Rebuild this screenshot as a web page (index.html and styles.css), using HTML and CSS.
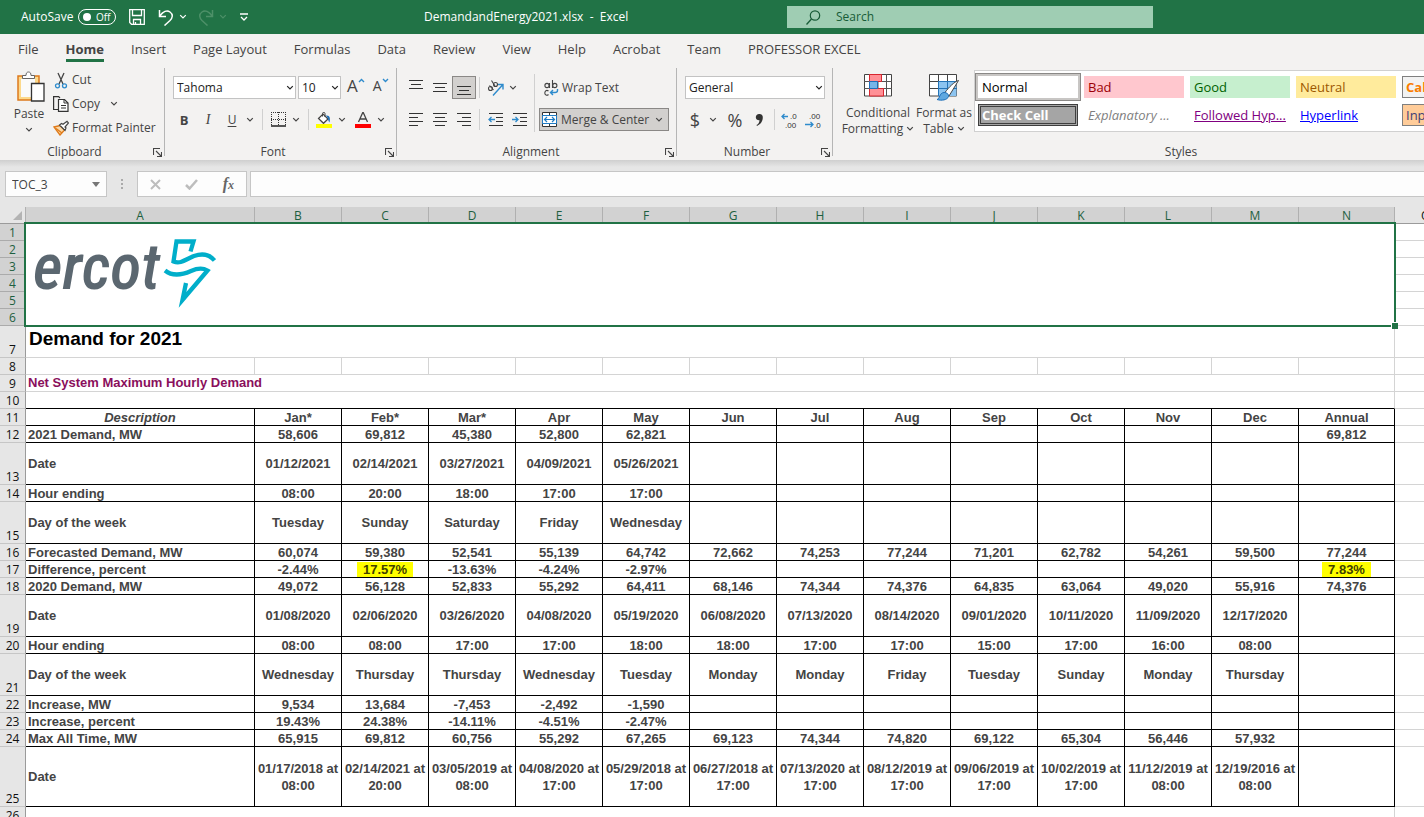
FILE: index.html
```html
<!DOCTYPE html>
<html lang="en">
<head>
<meta charset="utf-8">
<title>DemandandEnergy2021.xlsx - Excel</title>
<link rel="stylesheet" href="styles.css">
</head>
<body>
<svg class="defs" aria-hidden="true">
  <symbol id="chev" viewBox="0 0 8 6"><path d="M1.2 1.2 4 4l2.800-2.800" fill="none" stroke="currentColor" stroke-width="1.200"/></symbol>
  <symbol id="launch" viewBox="0 0 9 9"><path d="M.5 7V.5H7M3 3l5 5M8.500 4v4.500H4" fill="none" stroke="#444" stroke-width="1.100"/></symbol>
</svg>

<header class="titlebar">
  <div class="quick">
    <span id="as">AutoSave</span>
    <button class="toggle" aria-labelledby="as"><i></i>Off</button>
    <button class="qb save" aria-label="Save"><svg width="16" height="16" viewBox="0 0 16 16"><path d="M.7.700h14.600v14.600H2.500L.7 13.500zM3.500 1v5.500h9V1M4.500 15v-4.500h7V15M6.500 15v-2" fill="none" stroke="#fff" stroke-width="1.300"/></svg></button>
    <button class="qb undo" aria-label="Undo"><svg width="16" height="17" viewBox="0 0 16 17"><path d="M1.500 1v6.500H8M1.800 7C5 2.500 9 1 12 3c3.500 2.500 2.500 6 0 8.500L6.500 16.500" fill="none" stroke="#fff" stroke-width="1.500"/></svg></button>
    <svg class="c light" ><use href="#chev"/></svg>
    <button class="qb redo" aria-label="Redo"><svg width="16" height="17" viewBox="0 0 16 17"><path d="M14.500 1v6.500H8M14.200 7C11 2.500 7 1 4 3 .5 5.500 1.500 9 4 11.500L9.500 16.500" fill="none" stroke="#4d9068" stroke-width="1.500"/></svg></button>
    <svg class="c dim"><use href="#chev"/></svg>
    <button class="qb more" aria-label="Customize toolbar"><svg width="8" height="8" viewBox="0 0 8 8"><path d="M0 1h8M1 4l3 3 3-3" fill="none" stroke="#fff" stroke-width="1.300"/></svg></button>
  </div>
  <div class="doc">DemandandEnergy2021.xlsx &nbsp;-&nbsp; Excel</div>
  <label class="search">
    <svg width="15" height="15" viewBox="0 0 15 15"><circle cx="9" cy="5.500" r="4.700" fill="none" stroke="#185c37" stroke-width="1.200"/><path d="M5.500 9 .5 14.500" stroke="#185c37" stroke-width="1.300"/></svg>
    <input type="search" placeholder="Search" aria-label="Search">
  </label>
</header>

<nav class="tabs">
  <a href="#">File</a><a href="#" class="on">Home</a><a href="#">Insert</a><a href="#">Page Layout</a><a href="#">Formulas</a><a href="#">Data</a><a href="#">Review</a><a href="#">View</a><a href="#">Help</a><a href="#">Acrobat</a><a href="#">Team</a><a href="#">PROFESSOR EXCEL</a>
</nav>

<section class="ribbon">
  <div class="group clip">
    <div class="body">
      <button class="paste">
        <svg width="30" height="32" viewBox="0 0 30 32"><path d="M2 5h21v24H2z" fill="#fcd98c" stroke="#dd7a1c" stroke-width="1.500"/><path d="M5 8h14v18H5z" fill="#fafafa"/><path d="M6.500 7.500v-3H10C10 2 11 1 12.500 1S15 2 15 4.500h3.500v3z" fill="#fff" stroke="#666"/><path d="M15.500 12.500h12.500v17.500H15.500z" fill="#fff" stroke="#333" stroke-width="1.300"/></svg>
        <span>Paste</span>
        <svg class="c"><use href="#chev"/></svg>
      </button>
      <div class="stack">
        <button><svg width="16" height="17" viewBox="0 0 16 17"><path d="M5 1l5 11M11 1 6 12" stroke="#444" stroke-width="1.300" fill="none"/><circle cx="4.500" cy="13.800" r="2" fill="none" stroke="#2e8bcc" stroke-width="1.300"/><circle cx="11.500" cy="13.800" r="2" fill="none" stroke="#2e8bcc" stroke-width="1.300"/></svg>Cut</button>
        <button><svg width="16" height="16" viewBox="0 0 16 16"><path d="M5 13.500H.6V.600h5L7 2" fill="none" stroke="#333" stroke-width="1.200"/><path d="M5.500 3.500h6l3.500 3.500v8.400H5.500z" fill="#fff" stroke="#333" stroke-width="1.200"/><path d="M11 3.500V7h4M8 9.500h5M8 12h5" fill="none" stroke="#333"/></svg>Copy<svg class="c"><use href="#chev"/></svg></button>
        <button><svg width="16" height="16" viewBox="0 0 16 16"><path d="M1 7l6-1.500 4.500 4.500L7 15z" fill="#fbd9a8" stroke="#e07b1a" stroke-width="1.400"/><path d="M3 8.500 9 13" stroke="#e07b1a" stroke-width="1.400"/><path d="M6.500 5 12 10.500l1-2.500-1-1 3.500-4L14 1.200l-4 3L8.500 3.500z" fill="#fff" stroke="#444" stroke-width="1.200"/></svg>Format Painter</button>
      </div>
    </div>
    <div class="foot"><span>Clipboard</span><svg class="l"><use href="#launch"/></svg></div>
  </div>

  <div class="group font">
    <div class="body rows">
      <div class="row r1">
        <label class="combo name"><select aria-label="Font"><option>Tahoma</option></select><svg class="c"><use href="#chev"/></svg></label>
        <label class="combo size"><select aria-label="Font size"><option>10</option></select><svg class="c"><use href="#chev"/></svg></label>
        <button class="grow" aria-label="Increase font size"><b>A</b><svg width="7" height="5" viewBox="0 0 7 5"><path d="M1 4 3.500 1.500 6 4" fill="none" stroke="#2e8bcc" stroke-width="1.400"/></svg></button>
        <button class="shrink" aria-label="Decrease font size"><b>A</b><svg width="7" height="5" viewBox="0 0 7 5"><path d="M1 1l2.500 2.500L6 1" fill="none" stroke="#2e8bcc" stroke-width="1.400"/></svg></button>
      </div>
      <div class="row">
        <button class="t24 bold">B</button><button class="t24 ital">I</button><button class="t24 und">U</button><button class="d" aria-label="Underline options"><svg class="c"><use href="#chev"/></svg></button>
        <i class="sep"></i>
        <button class="t24" aria-label="Borders"><svg width="15" height="15" viewBox="0 0 15 15"><path d="M0 .5h15M0 7.500h15M.5 0v14M7.500 0v14M14.500 0v14" stroke="#333" stroke-dasharray="1 1"/><path d="M0 14h15" stroke="#222" stroke-width="1.500"/></svg></button><button class="d" aria-label="Border options"><svg class="c"><use href="#chev"/></svg></button>
        <i class="sep"></i>
        <button class="t24" aria-label="Fill color"><svg width="16" height="16" viewBox="0 0 16 16"><path d="M2.500 6.500 7 2l5 5-4.500 4.300z" fill="#fff" stroke="#444" stroke-width="1.200"/><path d="M6.500 4.500V1.500C6.500 0 9 0 9 1.500V5" fill="none" stroke="#444"/><path d="M10 3.500c4-.5 4.500 3 3.500 7-1-1-1.500-3-1.500-4z" fill="#1f6fb5"/><path d="M0 12h16v4H0z" fill="#ff0"/></svg></button><button class="d" aria-label="Fill options"><svg class="c"><use href="#chev"/></svg></button>
        <button class="t24 fc" aria-label="Font color"><svg width="16" height="16" viewBox="0 0 16 16"><path d="M3.500 10 8 0l4.500 10M5 7h6" fill="none" stroke="#444" stroke-width="1.300"/><path d="M0 12h16v4H0z" fill="#f00"/></svg></button><button class="d" aria-label="Font color options"><svg class="c"><use href="#chev"/></svg></button>
      </div>
    </div>
    <div class="foot"><span>Font</span><svg class="l"><use href="#launch"/></svg></div>
  </div>

  <div class="group align">
    <div class="body">
      <div class="rows">
        <div class="row">
          <button class="t24" aria-label="Top align"><svg width="14" height="15" viewBox="0 0 14 15"><path d="M0 .5h14M2 4.500h10M0 8.500h14" stroke="#333"/></svg></button>
          <button class="t24" aria-label="Middle align"><svg width="14" height="15" viewBox="0 0 14 15"><path d="M0 3.500h14M2 7.500h10M0 11.500h14" stroke="#333"/></svg></button>
          <button class="t24 sel" aria-label="Bottom align" aria-pressed="true"><svg width="14" height="15" viewBox="0 0 14 15"><path d="M0 6.500h14M2 10.500h10M0 14.500h14" stroke="#333"/></svg></button>
          <i class="sep"></i>
          <button class="t24" aria-label="Orientation"><svg width="17" height="16" viewBox="0 0 17 16"><g fill="none" stroke="#444" stroke-width="1.100"><circle cx="3.500" cy="8.500" r="2"/><path d="M2.500 5.500 6.500 10"/><circle cx="8.500" cy="4.500" r="2"/><path d="M4.500.500 8 6"/></g><path d="M6 15.500 15.500 5M11 4.500h5v5" fill="none" stroke="#2e8bcc" stroke-width="1.400"/></svg></button><button class="d" aria-label="Orientation options"><svg class="c"><use href="#chev"/></svg></button>
        </div>
        <div class="row">
          <button class="t24" aria-label="Align left"><svg width="14" height="14" viewBox="0 0 14 14"><path d="M0 .5h14M0 4.500h9M0 8.500h14M0 12.500h9" stroke="#333"/></svg></button>
          <button class="t24" aria-label="Center"><svg width="14" height="14" viewBox="0 0 14 14"><path d="M0 .5h14M2 4.500h10M0 8.500h14M2 12.500h10" stroke="#333"/></svg></button>
          <button class="t24" aria-label="Align right"><svg width="14" height="14" viewBox="0 0 14 14"><path d="M0 .5h14M5 4.500h9M0 8.500h14M5 12.500h9" stroke="#333"/></svg></button>
          <i class="sep"></i>
          <button class="t24" aria-label="Decrease indent"><svg width="15" height="14" viewBox="0 0 15 14"><path d="M1 .5h14M8 4.500h7M8 8.500h7M1 12.500h14" stroke="#333"/><path d="M7 6.500H1M3.500 4 1 6.500 3.500 9" fill="none" stroke="#2e8bcc" stroke-width="1.300"/></svg></button>
          <button class="t24" aria-label="Increase indent"><svg width="15" height="14" viewBox="0 0 15 14"><path d="M1 .5h14M8 4.500h7M8 8.500h7M1 12.500h14" stroke="#333"/><path d="M0 6.500h6M3.500 4 6 6.500 3.500 9" fill="none" stroke="#2e8bcc" stroke-width="1.300"/></svg></button>
        </div>
      </div>
      <i class="tallsep"></i>
      <div class="rows">
        <button class="wrap"><svg width="15" height="16" viewBox="0 0 15 16"><g fill="none" stroke="#444" stroke-width="1.100"><circle cx="3" cy="5.500" r="2.100"/><path d="M5.500 3v5M8.500 0v8M4.500 11C2.500 9.500.8 11 .8 13s2 3 3.700 1.500"/><circle cx="10.800" cy="5.500" r="2.100"/></g><path d="M13.500 9v1.500c0 1.500-1 2-2.500 2H6.500M9 10l-2.500 2.500L9 15" fill="none" stroke="#2e8bcc" stroke-width="1.400"/></svg>Wrap Text</button>
        <button class="merge" aria-pressed="true"><svg width="15" height="15" viewBox="0 0 15 15"><path d="M.5.500h14v14H.5zM7.500 0v15" fill="#fff" stroke="#333"/><path d="M.5 3.500h14v8H.5z" fill="#fff" stroke="#1e7bc4"/><path d="M2.500 7.500h10M5 5 2.500 7.500 5 10M10 5l2.500 2.500L10 10" fill="none" stroke="#1e7bc4" stroke-width="1.200"/></svg>Merge &amp; Center<svg class="c"><use href="#chev"/></svg></button>
      </div>
    </div>
    <div class="foot"><span>Alignment</span><svg class="l"><use href="#launch"/></svg></div>
  </div>

  <div class="group num">
    <div class="body rows">
      <label class="combo"><select aria-label="Number format"><option>General</option></select><svg class="c"><use href="#chev"/></svg></label>
      <div class="row">
        <button class="t24 big">$</button><button class="d" aria-label="Currency options"><svg class="c"><use href="#chev"/></svg></button>
        <button class="t24 big pct">%</button>
        <button class="t24" aria-label="Comma style"><svg width="9" height="14" viewBox="0 0 9 14"><path d="M4 1a3.200 3.200 0 0 1 3.800 3.500c0 4-2.500 7-5.800 8.500l-.5-1C3.500 11 4.500 9 4.500 7.200 2.500 7.400.8 6.200.8 4.200.8 2.500 2.200 1 4 1z" fill="#333"/></svg></button>
        <i class="sep"></i>
        <button class="t24 dec" aria-label="Increase decimal"><svg width="18" height="20" viewBox="0 0 18 20"><path d="M7 6.500H1M3.500 4 1 6.500 3.500 9" fill="none" stroke="#2e8bcc" stroke-width="1.300"/><text x="9" y="9">.0</text><text x="4" y="18">.00</text></svg></button>
        <button class="t24 dec" aria-label="Decrease decimal"><svg width="18" height="20" viewBox="0 0 18 20"><path d="M0 14.500h8M5.500 12 8 14.500 5.500 17" fill="none" stroke="#2e8bcc" stroke-width="1.300"/><text x="4" y="9">.00</text><text x="9" y="18">.0</text></svg></button>
      </div>
    </div>
    <div class="foot"><span>Number</span><svg class="l"><use href="#launch"/></svg></div>
  </div>

  <div class="group styles">
    <div class="body">
      <button class="large cond">
        <svg width="28" height="23" viewBox="0 0 28 23"><path d="M.5.500h27v21.500H.5z" fill="#fff" stroke="#444"/><path d="M0 7.500h28M0 14.500h28M5.500 0v22M14 0v22M22.500 0v22" stroke="#555"/><path d="M5.500.500h12v7h-12zM5.500 14.500h14v7.500h-14z" fill="#ff9096" stroke="#d8262f"/><path d="M5.500 7.500h8v7h-8z" fill="#77b5e8" stroke="#1e6fb8"/></svg>
        <span>Conditional<br>Formatting <svg class="c"><use href="#chev"/></svg></span>
      </button>
      <button class="large fmt">
        <svg width="30" height="27" viewBox="0 0 30 27"><path d="M.5.500h27v21.500H.5z" fill="#fff" stroke="#444"/><path d="M9.500 7.500h18V22h-18z" fill="#8cc4f0"/><path d="M0 7.500h28M0 14.500h28M9.500 0v22M18.500 0v22" stroke="#444"/><path d="M9.500 7.500H28M9.500 14.500H28M9.500 7v15M18.500 7v15" stroke="#2474b8"/><path d="M29.500 6.500 20 22l-4-3.500C20 13 25 8 29.500 6.500z" fill="#fff" stroke="#444"/><path d="M15 18.500c2.500 0 5 1.500 4.500 4-1 3.500-7 4.500-11.500 3 3-.5 2-6.500 7-7z" fill="#5fa8e0" stroke="#1e6fb8"/></svg>
        <span>Format as<br>Table <svg class="c"><use href="#chev"/></svg></span>
      </button>
      <div class="gallery">
        <button class="s-normal">Normal</button><button class="s-bad">Bad</button><button class="s-good">Good</button><button class="s-neutral">Neutral</button><button class="s-calc">Calculation</button>
        <button class="s-check">Check Cell</button><button class="s-expl">Explanatory ...</button><button class="s-fol">Followed Hyp...</button><button class="s-link">Hyperlink</button><button class="s-input">Input</button>
      </div>
    </div>
    <div class="foot"><span>Styles</span></div>
  </div>
</section>

<section class="formula">
  <div class="namebox"><input value="TOC_3" aria-label="Name box"><svg width="8" height="5" viewBox="0 0 8 5"><path d="M0 0h8L4 5z" fill="#777"/></svg></div>
  <i class="dots"></i>
  <div class="fbuttons">
    <button aria-label="Cancel"><svg width="11" height="11" viewBox="0 0 11 11"><path d="M1 1l9 9M10 1 1 10" stroke="#bdbdbd" stroke-width="2"/></svg></button>
    <button aria-label="Enter"><svg width="13" height="11" viewBox="0 0 13 11"><path d="M1 6l3.500 3.500L12 1" fill="none" stroke="#bdbdbd" stroke-width="2.500"/></svg></button>
    <button aria-label="Insert function" class="fx">f<small>x</small></button>
  </div>
  <input class="fx-input" aria-label="Formula">
</section>

<main class="sheet">
<table>
<colgroup><col class="c-row"><col class="c-a"><col class="c-m" span="12"><col class="c-n"><col></colgroup>
<thead><tr><th class="corner"><svg width="9" height="9" viewBox="0 0 9 9"><path d="M9 0v9H0z" fill="#b3b3b3"/></svg></th><th>A</th><th>B</th><th>C</th><th>D</th><th>E</th><th>F</th><th>G</th><th>H</th><th>I</th><th>J</th><th>K</th><th>L</th><th>M</th><th>N</th><th class="o">O</th></tr></thead>
<tbody>
<tr class="picked"><th>1</th><td class="merged" colspan="14" rowspan="6">
  <svg class="logo" width="186" height="76" viewBox="0 0 186 76" role="img" aria-label="ercot"><text x="3" y="55">ercot</text><g transform="translate(-30 -34)" fill="none" stroke="#00aeca" stroke-width="4.300" stroke-miterlimit="12"><path d="M190.500 51.500 193.500 41.500H176.500L173.500 61.500C181 64.500 186 59 194 56C203 53 210 55 214.500 60.500"/><path d="M165 70.500C173 77 182 75 191 71C199 67.500 204 68.500 207.500 70.500L182.500 100L186 83"/></g></svg>
  <i class="handle"></i></td><td></td></tr>
<tr class="picked"><th>2</th><td></td></tr>
<tr class="picked"><th>3</th><td></td></tr>
<tr class="picked"><th>4</th><td></td></tr>
<tr class="picked"><th>5</th><td></td></tr>
<tr class="picked"><th>6</th><td></td></tr>
<tr class="h32"><th>7</th><td colspan="14" class="title">Demand for 2021</td><td></td></tr>
<tr><th>8</th><td></td><td></td><td></td><td></td><td></td><td></td><td></td><td></td><td></td><td></td><td></td><td></td><td></td><td></td><td></td></tr>
<tr><th>9</th><td colspan="14" class="sub">Net System Maximum Hourly Demand</td><td></td></tr>
<tr><th>10</th><td colspan="14" class="above"></td><td></td></tr>
<tr class="data head"><th>11</th><td>Description</td><td>Jan*</td><td>Feb*</td><td>Mar*</td><td>Apr</td><td>May</td><td>Jun</td><td>Jul</td><td>Aug</td><td>Sep</td><td>Oct</td><td>Nov</td><td>Dec</td><td>Annual</td><td></td></tr>
<tr class="data"><th>12</th><td>2021 Demand, MW</td><td>58,606</td><td>69,812</td><td>45,380</td><td>52,800</td><td>62,821</td><td></td><td></td><td></td><td></td><td></td><td></td><td></td><td>69,812</td><td></td></tr>
<tr class="data h42"><th>13</th><td>Date</td><td>01/12/2021</td><td>02/14/2021</td><td>03/27/2021</td><td>04/09/2021</td><td>05/26/2021</td><td></td><td></td><td></td><td></td><td></td><td></td><td></td><td></td><td></td></tr>
<tr class="data"><th>14</th><td>Hour ending</td><td>08:00</td><td>20:00</td><td>18:00</td><td>17:00</td><td>17:00</td><td></td><td></td><td></td><td></td><td></td><td></td><td></td><td></td><td></td></tr>
<tr class="data h42"><th>15</th><td>Day of the week</td><td>Tuesday</td><td>Sunday</td><td>Saturday</td><td>Friday</td><td>Wednesday</td><td></td><td></td><td></td><td></td><td></td><td></td><td></td><td></td><td></td></tr>
<tr class="data"><th>16</th><td>Forecasted Demand, MW</td><td>60,074</td><td>59,380</td><td>52,541</td><td>55,139</td><td>64,742</td><td>72,662</td><td>74,253</td><td>77,244</td><td>71,201</td><td>62,782</td><td>54,261</td><td>59,500</td><td>77,244</td><td></td></tr>
<tr class="data"><th>17</th><td>Difference, percent</td><td>-2.44%</td><td><mark>17.57%</mark></td><td>-13.63%</td><td>-4.24%</td><td>-2.97%</td><td></td><td></td><td></td><td></td><td></td><td></td><td></td><td><mark>7.83%</mark></td><td></td></tr>
<tr class="data"><th>18</th><td>2020 Demand, MW</td><td>49,072</td><td>56,128</td><td>52,833</td><td>55,292</td><td>64,411</td><td>68,146</td><td>74,344</td><td>74,376</td><td>64,835</td><td>63,064</td><td>49,020</td><td>55,916</td><td>74,376</td><td></td></tr>
<tr class="data h42"><th>19</th><td>Date</td><td>01/08/2020</td><td>02/06/2020</td><td>03/26/2020</td><td>04/08/2020</td><td>05/19/2020</td><td>06/08/2020</td><td>07/13/2020</td><td>08/14/2020</td><td>09/01/2020</td><td>10/11/2020</td><td>11/09/2020</td><td>12/17/2020</td><td></td><td></td></tr>
<tr class="data"><th>20</th><td>Hour ending</td><td>08:00</td><td>08:00</td><td>17:00</td><td>17:00</td><td>18:00</td><td>18:00</td><td>17:00</td><td>17:00</td><td>15:00</td><td>17:00</td><td>16:00</td><td>08:00</td><td></td><td></td></tr>
<tr class="data h42"><th>21</th><td>Day of the week</td><td>Wednesday</td><td>Thursday</td><td>Thursday</td><td>Wednesday</td><td>Tuesday</td><td>Monday</td><td>Monday</td><td>Friday</td><td>Tuesday</td><td>Sunday</td><td>Monday</td><td>Thursday</td><td></td><td></td></tr>
<tr class="data"><th>22</th><td>Increase, MW</td><td>9,534</td><td>13,684</td><td>-7,453</td><td>-2,492</td><td>-1,590</td><td></td><td></td><td></td><td></td><td></td><td></td><td></td><td></td><td></td></tr>
<tr class="data"><th>23</th><td>Increase, percent</td><td>19.43%</td><td>24.38%</td><td>-14.11%</td><td>-4.51%</td><td>-2.47%</td><td></td><td></td><td></td><td></td><td></td><td></td><td></td><td></td><td></td></tr>
<tr class="data"><th>24</th><td>Max All Time, MW</td><td>65,915</td><td>69,812</td><td>60,756</td><td>55,292</td><td>67,265</td><td>69,123</td><td>74,344</td><td>74,820</td><td>69,122</td><td>65,304</td><td>56,446</td><td>57,932</td><td></td><td></td></tr>
<tr class="data h60"><th>25</th><td>Date</td><td>01/17/2018 at 08:00</td><td>02/14/2021 at 20:00</td><td>03/05/2019 at 08:00</td><td>04/08/2020 at 17:00</td><td>05/29/2018 at 17:00</td><td>06/27/2018 at 17:00</td><td>07/13/2020 at 17:00</td><td>08/12/2019 at 17:00</td><td>09/06/2019 at 17:00</td><td>10/02/2019 at 17:00</td><td>11/12/2019 at 08:00</td><td>12/19/2016 at 08:00</td><td></td><td></td></tr>
<tr><th>26</th><td colspan="14"></td><td></td></tr>
</tbody>
</table>
</main>
</body>
</html>
```
FILE: styles.css
```css
* { box-sizing: border-box; }
html, body { height: 100%; }
body {
  margin: 0;
  overflow: hidden;
  background: #e6e6e6;
  color: #444;
  font: 12px/16px "Open Sans", "Noto Sans", sans-serif;
}
button, input, select { font: inherit; color: inherit; }
button { border: 0; padding: 0; background: none; }
svg { display: block; flex: none; }
.defs { display: none; }
.c { width: 8px; height: 6px; color: #444; }
.light { color: #fff; }
.dim { color: #4d9068; }

/* title bar */
.titlebar {
  height: 34px;
  background: #217346;
  color: #fff;
  display: grid;
  grid-template-columns: minmax(0, 424fr) minmax(0, 363fr) minmax(0, 366fr) minmax(0, 271fr);
  align-items: center;
}
.quick { display: flex; align-items: center; padding-left: 21px; }
.toggle {
  display: flex; align-items: center; justify-content: space-between;
  width: 38px; height: 16px; margin-left: 5px; padding: 0 5px 0 4px;
  border: 1px solid #fff; border-radius: 8px;
  font-size: 10px; line-height: 14px;
}
.toggle i { width: 8px; height: 8px; border-radius: 50%; background: #fff; }
.save { margin-left: 13px; }
.undo { margin: 0 5px 0 13px; }
.redo { margin: 0 5px 0 11px; }
.more { margin-left: 13px; }
.search { display: flex; align-items: center; height: 22px; padding-left: 19px; gap: 15px; background: #9fcdb3; }
.search input { flex: 1; min-width: 0; border: 0; padding: 0; background: none; color: #185c37; }
.search input::placeholder { color: #185c37; opacity: 1; }

/* tabs */
.tabs { display: flex; gap: 27px; height: 34px; padding: 5px 18px 0; background: #f3f2f1; font-size: 13px; line-height: 20px; overflow: hidden; }
.tabs a { color: #444; text-decoration: none; height: 23px; white-space: nowrap; }
.tabs .on { font-weight: 700; border-bottom: 3px solid #217346; }

/* ribbon */
.ribbon { display: flex; height: 92px; background: #f3f2f1; overflow: hidden; }
.group { display: flex; flex-direction: column; flex: none; position: relative; }
.group:not(.styles)::after { content: ""; position: absolute; right: 0; top: 0; height: 88px; width: 1px; background: #b5b5b5; }
.clip { width: 165px; }
.font { width: 232px; }
.align { width: 280px; }
.num { width: 156px; }
.styles { width: 696px; }
.body { flex: 1; display: flex; }
.foot { display: flex; align-items: center; height: 16px; padding-right: 3px; }
.foot span { flex: 1; text-align: center; }
.foot .l { width: 9px; height: 9px; }
.font .foot span, .clip .foot span, .num .foot span { padding-right: 4px; }
.styles .foot { padding-right: 0; }
.rows { display: flex; flex-direction: column; gap: 9px; padding-top: 8px; }
.row { display: flex; align-items: center; height: 23px; }
.t24 { flex: none; width: 24px; height: 23px; display: flex; align-items: center; justify-content: center; }
.d { flex: none; width: 12px; height: 23px; display: flex; align-items: center; justify-content: center; }
.sep { flex: none; width: 1px; height: 21px; background: #d0d0d0; }

.paste { width: 30px; margin: 3px 9px 0 14px; display: flex; flex-direction: column; align-items: center; }
.paste svg:first-child { margin-left: 4px; }
.paste span { margin: 3px 0 5px; white-space: nowrap; }
.stack { display: flex; flex-direction: column; }
.stack button { display: flex; align-items: center; height: 24px; gap: 3px; white-space: nowrap; }
.stack .c { margin-left: 7px; }

.combo { position: relative; display: block; height: 23px; color: #222; }
.combo select {
  appearance: none; display: block; width: 100%; height: 100%;
  border: 1px solid #c3c3c3; border-radius: 0; background: #fff; padding: 0 14px 0 3px;
}
.combo .c { position: absolute; right: 2px; top: 9px; color: #222; }
.name { width: 123px; margin-right: 2px; }
.size { width: 43px; }
.font .rows { padding-left: 7px; }
.font .r1 { padding-left: 1px; }
.grow, .shrink { display: flex; align-items: flex-start; }
.grow { margin-left: 6px; }
.shrink { margin-left: 8px; }
.grow b, .shrink b { font-weight: 400; line-height: 20px; }
.grow b { font-size: 17px; }
.shrink b { font-size: 14px; }
.grow svg, .shrink svg { margin-top: 2px; }
.row .grow, .row .shrink { height: 23px; }
.bold { font-weight: 700; font-size: 13px; }
.ital { font: italic 14px "Liberation Serif", serif; }
.und { text-decoration: underline; text-underline-offset: 2px; }
.font .sep { margin: 0 3px 0 6px; }
.fc { margin-left: 3px; }

.align .rows:first-child { padding-left: 7px; width: 137px; }
.align .sep { margin: 0 3px; }
.sel { background: #d2d0ce; border: 1px solid #8a8886; }
.tallsep { width: 1px; height: 58px; margin: 6px 4px 0 0; background: #d0d0d0; }
.wrap, .merge { display: flex; align-items: center; height: 23px; gap: 3px; white-space: nowrap; }
.wrap { padding-left: 5px; }
.merge { width: 130px; padding-left: 2px; gap: 4px; background: #d2d0ce; border: 1px solid #8a8886; }
.merge .c { margin-left: auto; margin-right: 5px; }

.num .rows { padding-left: 8px; }
.num .combo { width: 140px; }
.num .row { margin-left: -2px; }
.big { font-size: 18px; }
.pct { margin-left: 4px; }
.num .sep { margin: 0 3px; }
.dec text { font: 8px "Liberation Sans", sans-serif; fill: #333; }

.large { display: flex; flex-direction: column; align-items: center; padding-top: 6px; white-space: nowrap; }
.large > svg { margin-bottom: 8px; }
.fmt > svg { margin-bottom: 4px; }
.large span { text-align: center; }
.large .c { display: inline-block; vertical-align: 1px; }
.cond { width: 72px; margin-left: 9px; }
.fmt { width: 60px; }
.gallery {
  flex: 1; display: grid; grid-template: 22px 22px / repeat(5, 100px); gap: 6px;
  height: 62px; margin-top: 2px; padding: 5px 3px;
  background: #fff; border: 1px solid #d0d0d0;
}
.gallery button { text-align: left; padding-left: 4px; font-size: 13px; line-height: 20px; white-space: nowrap; overflow: hidden; }
.gallery .s-normal { background: #fff; color: #000; outline: 2px solid #c8c6c4; box-shadow: 0 0 0 3px #8a8886; }
.s-bad { background: #ffc7ce; color: #9c0006; }
.s-good { background: #c6efce; color: #006100; }
.s-neutral { background: #ffeb9c; color: #9c5700; }
.gallery .s-calc { background: #f2f2f2; color: #fa7d00; font-weight: 700; border: 1px solid #7f7f7f; padding-left: 3px; }
.gallery .s-check { background: #a5a5a5; color: #fff; font-weight: 700; border: 3px double #3f3f3f; padding-left: 1px; line-height: 16px; }
.s-expl { color: #7f7f7f; font-style: italic; }
.s-fol { color: #800080; text-decoration: underline; }
.s-link { color: #00f; text-decoration: underline; }
.gallery .s-input { background: #ffcc99; color: #3f3f76; border: 1px solid #7f7f7f; padding-left: 3px; }

/* formula bar */
.formula { display: flex; height: 47px; padding: 11px 0 10px 5px; background: linear-gradient(#cfcfcf, #e6e6e6 7px); }
.namebox, .fbuttons, .fx-input { background: #fdfdfd; border: 1px solid #c6c6c6; height: 26px; }
.namebox { width: 102px; display: flex; align-items: center; padding: 0 6px; }
.namebox input { flex: 1; min-width: 0; border: 0; padding: 1px 0 0; background: none; }
.dots { width: 2px; height: 11px; margin: 8px 14px; background: repeating-linear-gradient(#aaa 0 2px, transparent 2px 4px); }
.fbuttons { width: 110px; display: flex; align-items: center; justify-content: space-between; padding: 0 12px; }
.fx { font: italic 700 16px/18px "Liberation Serif", serif; color: #666; }
.fx small { font-size: 12px; }
.fx-input { flex: 1; min-width: 0; margin-left: 3px; border-right: 0; }

/* worksheet */
.sheet { overflow: hidden; }
table { width: 100%; table-layout: fixed; border-spacing: 0; background: #fff; }
.c-row { width: 26px; }
.c-a { width: 229px; }
.c-m { width: 87px; }
.c-n { width: 96px; }
tr { height: 17px; }
th { padding: 2px 0 0; font-weight: 400; line-height: 14px; color: #111; vertical-align: bottom; background: #e6e6e6; border-right: 1px solid #9b9b9b; border-bottom: 1px solid #c6c6c6; }
thead th { background: #d2d2d2; color: #1e6040; border-right-color: #b0b0b0; border-bottom-color: #9b9b9b; }
thead .corner { background: #e6e6e6; padding-bottom: 3px; }
.corner svg { margin-left: auto; margin-right: 3px; }
thead .o { background: #e6e6e6; color: #111; text-align: left; padding-left: 26px; border-right: 0; }
.picked th { background: #d2d2d2; color: #1e6040; border-bottom-color: #ababab; }
.h32 { height: 32px; }
.h42 { height: 42px; }
.h60 { height: 60px; }
td {
  padding: 2px 2px 0; line-height: 14px;
  border-right: 1px solid #d4d4d4; border-bottom: 1px solid #d4d4d4;
  font-family: "Liberation Sans", Arial, sans-serif; font-size: 13px; font-weight: 700;
}
td:last-child { border-right: 0; }
.merged { position: relative; padding: 0; vertical-align: top; }
.merged::after { content: ""; position: absolute; inset: -2px; border: 2px solid #217346; }
.handle { position: absolute; right: -4px; bottom: -4px; width: 7px; height: 7px; background: #217346; border: solid #fff; border-width: 1px 0 0 1px; z-index: 1; }
.logo { margin: 10px 0 0 4px; }
.logo text { font: italic 500 64px "Roboto Condensed", "Liberation Sans Narrow", "Liberation Sans", sans-serif; fill: #5b6770; }
.title { font-size: 19px; line-height: 22px; padding-left: 3px; vertical-align: top; color: #000; }
.sub { padding-top: 0; line-height: 16px; color: #8a0f5c; }
.above { border-bottom-color: #000; }
.data td { border-color: #000; text-align: center; }
.data td:nth-child(2) { text-align: left; }
.data td:last-child { border-color: #d4d4d4; }
.head td:nth-child(2) { text-align: center; font-style: italic; }
.h42 td, .h60 td { padding-top: 0; }
.h42 td { line-height: 16px; }
.h60 td { line-height: 17px; }
mark { display: inline-block; padding: 0 6px; background: #ff0; box-shadow: 0 -1px #ff0; color: #404000; }
```
